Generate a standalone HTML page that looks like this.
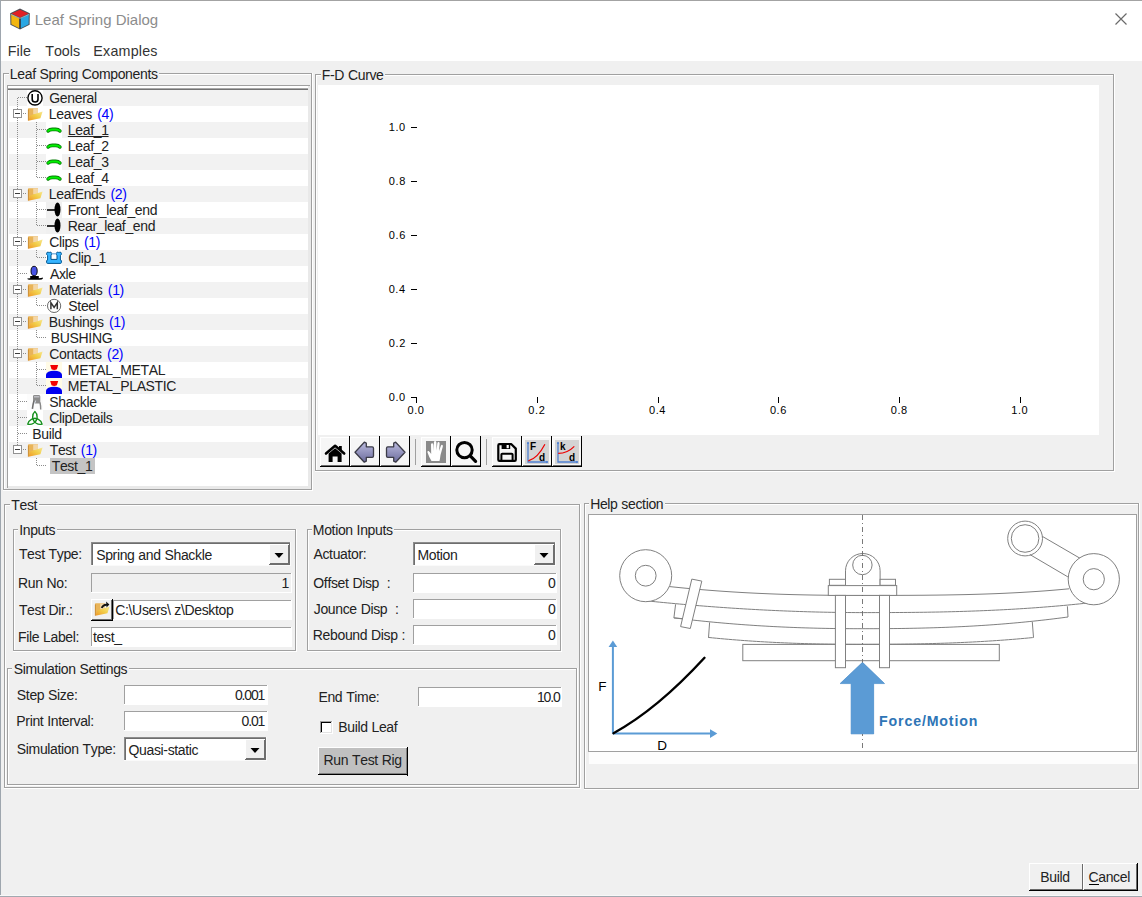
<!DOCTYPE html>
<html><head><meta charset="utf-8"><title>Leaf Spring Dialog</title>
<style>
html,body{margin:0;padding:0;}
body{width:1142px;height:897px;position:relative;overflow:hidden;background:#f0f0f0;font-family:"Liberation Sans",sans-serif;}
body>div{position:absolute;}
.t{white-space:pre;font-kerning:none;}
svg{overflow:visible}
</style></head><body>
<div style="left:0px;top:0px;width:1142px;height:61px;background:#ffffff;"></div>
<div style="left:0px;top:0px;width:1142px;height:1px;background:#a3a3a3;"></div>
<div style="left:0px;top:0px;width:1px;height:897px;background:#9ea6ae;"></div>
<div style="left:0px;top:895px;width:1142px;height:1px;background:#f8f8f8;"></div>
<div style="left:0px;top:896px;width:1142px;height:1px;background:#a2a9b0;"></div>
<svg style="position:absolute;left:0;top:0" width="40" height="34" viewBox="0 0 40 34">
<path d="M20 8.6 L29.8 13.2 L29.6 24.8 L20 29.6 L10.4 24.8 L10.2 13.2 Z" fill="#4a4f57"/>
<path d="M20 9.8 L28.4 13.6 L20 17.6 L11.6 13.6 Z" fill="#e11f25"/>
<path d="M11.2 14.6 L19.2 18.6 L19.2 28.2 L11.4 24.2 Z" fill="#f2b50f"/>
<path d="M28.8 14.6 L20.8 18.6 L20.8 28.2 L28.6 24.2 Z" fill="#2aa7e3"/>
<path d="M11.2 14.4 L20 18.4 L28.8 14.4" fill="none" stroke="#c9ced4" stroke-width="0.7"/>
<path d="M20 18.6 V28.6" stroke="#2e3238" stroke-width="1"/>
</svg>
<div class="t" style="left:34.77px;top:12px;font-size:15px;line-height:15px;color:#8c8c8c;">Leaf Spring Dialog</div>
<svg style="position:absolute;left:1114px;top:12px" width="14" height="14"><path d="M1.5 1.5 L12.5 12.5 M12.5 1.5 L1.5 12.5" stroke="#6a6a6a" stroke-width="1.2"/></svg>
<div class="t" style="left:7.83px;top:44px;font-size:14.3px;line-height:14.3px;color:#333;">File</div>
<div class="t" style="left:45.18px;top:44px;font-size:14.3px;line-height:14.3px;color:#333;">Tools</div>
<div class="t" style="left:93.33px;top:44px;font-size:14.3px;line-height:14.3px;color:#333;letter-spacing:0.2px;">Examples</div>
<div style="left:4px;top:74px;width:309px;height:1px;background:#ffffff;"></div>
<div style="left:4px;top:74px;width:1px;height:417px;background:#ffffff;"></div>
<div style="left:3px;top:490px;width:310px;height:1px;background:#ffffff;"></div>
<div style="left:312px;top:73px;width:1px;height:418px;background:#ffffff;"></div>
<div style="left:3px;top:73px;width:309px;height:1px;background:#a0a0a0;"></div>
<div style="left:3px;top:73px;width:1px;height:417px;background:#a0a0a0;"></div>
<div style="left:3px;top:489px;width:309px;height:1px;background:#a0a0a0;"></div>
<div style="left:311px;top:73px;width:1px;height:417px;background:#a0a0a0;"></div>
<div style="left:9px;top:65px;width:150px;height:18px;background:#f0f0f0;"></div>
<div class="t" style="left:9.85px;top:67px;font-size:14px;line-height:14px;color:#222;word-spacing:0.3px;letter-spacing:-0.35px;">Leaf Spring Components</div>
<div style="left:8px;top:86px;width:300px;height:400px;background:#ffffff;"></div>
<div style="left:7px;top:85px;width:1px;height:403px;background:#a0a0a0;"></div>
<div style="left:7px;top:85px;width:303px;height:1px;background:#a0a0a0;"></div>
<div style="left:308px;top:86px;width:3px;height:403px;background:#e9e9e9;"></div>
<div style="left:8px;top:486px;width:303px;height:3px;background:#e9e9e9;"></div>
<div style="left:8px;top:88px;width:300px;height:1px;background:#a9a9a9;"></div>
<div style="left:8px;top:89px;width:300px;height:1px;background:#727272;"></div>
<div style="left:9px;top:90px;width:299px;height:16px;background:#f2f2f2;"></div>
<div style="left:9px;top:122px;width:299px;height:16px;background:#f2f2f2;"></div>
<div style="left:9px;top:154px;width:299px;height:16px;background:#f2f2f2;"></div>
<div style="left:9px;top:186px;width:299px;height:16px;background:#f2f2f2;"></div>
<div style="left:9px;top:218px;width:299px;height:16px;background:#f2f2f2;"></div>
<div style="left:9px;top:250px;width:299px;height:16px;background:#f2f2f2;"></div>
<div style="left:9px;top:282px;width:299px;height:16px;background:#f2f2f2;"></div>
<div style="left:9px;top:314px;width:299px;height:16px;background:#f2f2f2;"></div>
<div style="left:9px;top:346px;width:299px;height:16px;background:#f2f2f2;"></div>
<div style="left:9px;top:378px;width:299px;height:16px;background:#f2f2f2;"></div>
<div style="left:9px;top:410px;width:299px;height:16px;background:#f2f2f2;"></div>
<div style="left:9px;top:442px;width:299px;height:16px;background:#f2f2f2;"></div>
<div style="left:17px;top:98px;width:1px;height:347px;background:repeating-linear-gradient(180deg,#8c8c8c 0 1px,transparent 1px 2px)"></div>
<div style="left:36px;top:122px;width:1px;height:56px;background:repeating-linear-gradient(180deg,#8c8c8c 0 1px,transparent 1px 2px)"></div>
<div style="left:36px;top:202px;width:1px;height:24px;background:repeating-linear-gradient(180deg,#8c8c8c 0 1px,transparent 1px 2px)"></div>
<div style="left:36px;top:250px;width:1px;height:8px;background:repeating-linear-gradient(180deg,#8c8c8c 0 1px,transparent 1px 2px)"></div>
<div style="left:36px;top:298px;width:1px;height:8px;background:repeating-linear-gradient(180deg,#8c8c8c 0 1px,transparent 1px 2px)"></div>
<div style="left:36px;top:330px;width:1px;height:8px;background:repeating-linear-gradient(180deg,#8c8c8c 0 1px,transparent 1px 2px)"></div>
<div style="left:36px;top:362px;width:1px;height:24px;background:repeating-linear-gradient(180deg,#8c8c8c 0 1px,transparent 1px 2px)"></div>
<div style="left:36px;top:458px;width:1px;height:8px;background:repeating-linear-gradient(180deg,#8c8c8c 0 1px,transparent 1px 2px)"></div>
<div style="left:18px;top:97px;width:9px;height:1px;background:repeating-linear-gradient(90deg,#8c8c8c 0 1px,transparent 1px 2px)"></div>
<svg style="position:absolute;left:27px;top:90px" width="16" height="16" viewBox="0 0 16 16"><rect width="16" height="16" fill="#fff"/><circle cx="8" cy="7.9" r="7.1" fill="#fff" stroke="#000" stroke-width="1.4"/><path d="M5.2 4 V9.2 Q5.2 12 8.1 12 Q11 12 11 9.2 V4" fill="none" stroke="#000" stroke-width="1.6"/></svg>
<div class="t" style="left:49.30px;top:91px;font-size:14px;line-height:14px;color:#222;word-spacing:0.3px;letter-spacing:-0.35px;">General</div>
<div style="left:23px;top:113px;width:4px;height:1px;background:repeating-linear-gradient(90deg,#8c8c8c 0 1px,transparent 1px 2px)"></div>
<svg style="position:absolute;left:27px;top:106px" width="16" height="16" viewBox="0 0 16 16"><defs><linearGradient id="fg2" x1="0" y1="1" x2="1" y2="0"><stop offset="0" stop-color="#f09628"/><stop offset="0.55" stop-color="#f2cf4a"/><stop offset="1" stop-color="#f7e794"/></linearGradient></defs><path d="M1 3 Q1 2.3 1.7 2.3 H11 V9.5 L1.2 14.6 Z" fill="#e9b458"/><path d="M6.2 2.4 H11 V8.3 H6.2 Z" fill="#f3d6a6"/><path d="M1.4 14.8 L3.3 9.4 L15.6 5.5 L13.4 12.2 Z" fill="url(#fg2)"/><path d="M1.4 14.6 V3.5" stroke="#c98a30" stroke-width="0.9"/></svg>
<div class="t" style="left:48.85px;top:107px;font-size:14px;line-height:14px;color:#222;word-spacing:0.3px;letter-spacing:-0.35px;">Leaves</div>
<div class="t" style="left:97.24px;top:107px;font-size:14px;line-height:14px;color:#0000ff;word-spacing:0.3px;letter-spacing:-0.35px;">(4)</div>
<div style="left:13px;top:109px;width:7px;height:7px;border:1px solid #919191;background:#fff"></div>
<div style="left:15px;top:113px;width:5px;height:1px;background:#3c3c3c;"></div>
<div style="left:37px;top:129px;width:9px;height:1px;background:repeating-linear-gradient(90deg,#8c8c8c 0 1px,transparent 1px 2px)"></div>
<svg style="position:absolute;left:46px;top:122px" width="16" height="16" viewBox="0 0 16 16"><rect width="16" height="16" fill="#fff"/><path d="M2.1 8.9 Q3.6 7.4 6.3 7.4 L9.7 7.4 Q12.4 7.4 13.9 8.9" fill="none" stroke="#0a7d0a" stroke-width="3.6" stroke-linecap="round" stroke-linejoin="round"/><path d="M2.1 8.9 Q3.6 7.4 6.3 7.4 L9.7 7.4 Q12.4 7.4 13.9 8.9" fill="none" stroke="#00f000" stroke-width="2" stroke-linecap="round" stroke-linejoin="round"/></svg>
<div class="t" style="left:67.85px;top:123px;font-size:14px;line-height:14px;color:#222;word-spacing:0.3px;letter-spacing:-0.35px;text-decoration:underline;">Leaf_1</div>
<div style="left:37px;top:145px;width:9px;height:1px;background:repeating-linear-gradient(90deg,#8c8c8c 0 1px,transparent 1px 2px)"></div>
<svg style="position:absolute;left:46px;top:138px" width="16" height="16" viewBox="0 0 16 16"><path d="M2.1 8.9 Q3.6 7.4 6.3 7.4 L9.7 7.4 Q12.4 7.4 13.9 8.9" fill="none" stroke="#0a7d0a" stroke-width="3.6" stroke-linecap="round" stroke-linejoin="round"/><path d="M2.1 8.9 Q3.6 7.4 6.3 7.4 L9.7 7.4 Q12.4 7.4 13.9 8.9" fill="none" stroke="#00f000" stroke-width="2" stroke-linecap="round" stroke-linejoin="round"/></svg>
<div class="t" style="left:67.85px;top:139px;font-size:14px;line-height:14px;color:#222;word-spacing:0.3px;letter-spacing:-0.35px;">Leaf_2</div>
<div style="left:37px;top:161px;width:9px;height:1px;background:repeating-linear-gradient(90deg,#8c8c8c 0 1px,transparent 1px 2px)"></div>
<svg style="position:absolute;left:46px;top:154px" width="16" height="16" viewBox="0 0 16 16"><rect width="16" height="16" fill="#fff"/><path d="M2.1 8.9 Q3.6 7.4 6.3 7.4 L9.7 7.4 Q12.4 7.4 13.9 8.9" fill="none" stroke="#0a7d0a" stroke-width="3.6" stroke-linecap="round" stroke-linejoin="round"/><path d="M2.1 8.9 Q3.6 7.4 6.3 7.4 L9.7 7.4 Q12.4 7.4 13.9 8.9" fill="none" stroke="#00f000" stroke-width="2" stroke-linecap="round" stroke-linejoin="round"/></svg>
<div class="t" style="left:67.85px;top:155px;font-size:14px;line-height:14px;color:#222;word-spacing:0.3px;letter-spacing:-0.35px;">Leaf_3</div>
<div style="left:37px;top:177px;width:9px;height:1px;background:repeating-linear-gradient(90deg,#8c8c8c 0 1px,transparent 1px 2px)"></div>
<svg style="position:absolute;left:46px;top:170px" width="16" height="16" viewBox="0 0 16 16"><path d="M2.1 8.9 Q3.6 7.4 6.3 7.4 L9.7 7.4 Q12.4 7.4 13.9 8.9" fill="none" stroke="#0a7d0a" stroke-width="3.6" stroke-linecap="round" stroke-linejoin="round"/><path d="M2.1 8.9 Q3.6 7.4 6.3 7.4 L9.7 7.4 Q12.4 7.4 13.9 8.9" fill="none" stroke="#00f000" stroke-width="2" stroke-linecap="round" stroke-linejoin="round"/></svg>
<div class="t" style="left:67.85px;top:171px;font-size:14px;line-height:14px;color:#222;word-spacing:0.3px;letter-spacing:-0.35px;">Leaf_4</div>
<div style="left:23px;top:193px;width:4px;height:1px;background:repeating-linear-gradient(90deg,#8c8c8c 0 1px,transparent 1px 2px)"></div>
<svg style="position:absolute;left:27px;top:186px" width="16" height="16" viewBox="0 0 16 16"><defs><linearGradient id="fg7" x1="0" y1="1" x2="1" y2="0"><stop offset="0" stop-color="#f09628"/><stop offset="0.55" stop-color="#f2cf4a"/><stop offset="1" stop-color="#f7e794"/></linearGradient></defs><path d="M1 3 Q1 2.3 1.7 2.3 H11 V9.5 L1.2 14.6 Z" fill="#e9b458"/><path d="M6.2 2.4 H11 V8.3 H6.2 Z" fill="#f3d6a6"/><path d="M1.4 14.8 L3.3 9.4 L15.6 5.5 L13.4 12.2 Z" fill="url(#fg7)"/><path d="M1.4 14.6 V3.5" stroke="#c98a30" stroke-width="0.9"/></svg>
<div class="t" style="left:48.85px;top:187px;font-size:14px;line-height:14px;color:#222;word-spacing:0.3px;letter-spacing:-0.35px;">LeafEnds</div>
<div class="t" style="left:110.55px;top:187px;font-size:14px;line-height:14px;color:#0000ff;word-spacing:0.3px;letter-spacing:-0.35px;">(2)</div>
<div style="left:13px;top:189px;width:7px;height:7px;border:1px solid #919191;background:#fff"></div>
<div style="left:15px;top:193px;width:5px;height:1px;background:#3c3c3c;"></div>
<div style="left:37px;top:209px;width:9px;height:1px;background:repeating-linear-gradient(90deg,#8c8c8c 0 1px,transparent 1px 2px)"></div>
<svg style="position:absolute;left:46px;top:202px" width="16" height="16" viewBox="0 0 16 16"><rect width="16" height="16" fill="#f0f0f0"/><path d="M1 8 H9" stroke="#000" stroke-width="1.6"/><ellipse cx="11.5" cy="7.5" rx="3" ry="7" fill="#000"/></svg>
<div class="t" style="left:67.85px;top:203px;font-size:14px;line-height:14px;color:#222;word-spacing:0.3px;letter-spacing:-0.35px;">Front_leaf_end</div>
<div style="left:37px;top:225px;width:9px;height:1px;background:repeating-linear-gradient(90deg,#8c8c8c 0 1px,transparent 1px 2px)"></div>
<svg style="position:absolute;left:46px;top:218px" width="16" height="16" viewBox="0 0 16 16"><rect width="16" height="16" fill="#f0f0f0"/><path d="M1 8 H9" stroke="#000" stroke-width="1.6"/><ellipse cx="11.5" cy="7.5" rx="3" ry="7" fill="#000"/></svg>
<div class="t" style="left:67.85px;top:219px;font-size:14px;line-height:14px;color:#222;word-spacing:0.3px;letter-spacing:-0.35px;">Rear_leaf_end</div>
<div style="left:23px;top:241px;width:4px;height:1px;background:repeating-linear-gradient(90deg,#8c8c8c 0 1px,transparent 1px 2px)"></div>
<svg style="position:absolute;left:27px;top:234px" width="16" height="16" viewBox="0 0 16 16"><defs><linearGradient id="fg10" x1="0" y1="1" x2="1" y2="0"><stop offset="0" stop-color="#f09628"/><stop offset="0.55" stop-color="#f2cf4a"/><stop offset="1" stop-color="#f7e794"/></linearGradient></defs><path d="M1 3 Q1 2.3 1.7 2.3 H11 V9.5 L1.2 14.6 Z" fill="#e9b458"/><path d="M6.2 2.4 H11 V8.3 H6.2 Z" fill="#f3d6a6"/><path d="M1.4 14.8 L3.3 9.4 L15.6 5.5 L13.4 12.2 Z" fill="url(#fg10)"/><path d="M1.4 14.6 V3.5" stroke="#c98a30" stroke-width="0.9"/></svg>
<div class="t" style="left:49.29px;top:235px;font-size:14px;line-height:14px;color:#222;word-spacing:0.3px;letter-spacing:-0.35px;">Clips</div>
<div class="t" style="left:84.00px;top:235px;font-size:14px;line-height:14px;color:#0000ff;word-spacing:0.3px;letter-spacing:-0.35px;">(1)</div>
<div style="left:13px;top:237px;width:7px;height:7px;border:1px solid #919191;background:#fff"></div>
<div style="left:15px;top:241px;width:5px;height:1px;background:#3c3c3c;"></div>
<div style="left:37px;top:257px;width:9px;height:1px;background:repeating-linear-gradient(90deg,#8c8c8c 0 1px,transparent 1px 2px)"></div>
<svg style="position:absolute;left:46px;top:250px" width="16" height="16" viewBox="0 0 16 16"><rect width="16" height="16" fill="#fff"/><path d="M1.5 13.4 Q0.6 13.4 0.6 12.4 V11 Q0.6 10 1.6 10 V5.6 Q0.6 5.1 0.6 3.6 Q0.6 2.1 2 2.1 Q2.8 2.1 3.1 2.8 Q3.4 2.1 4.2 2.1 Q5.6 2.1 5.6 3.6 Q5.6 5.1 5 5.6 V9.4 H11 V5.6 Q10.4 5.1 10.4 3.6 Q10.4 2.1 11.8 2.1 Q12.6 2.1 12.9 2.8 Q13.2 2.1 14 2.1 Q15.4 2.1 15.4 3.6 Q15.4 5.1 14.4 5.6 V10 Q15.4 10 15.4 11 V12.4 Q15.4 13.4 14.4 13.4 Z" fill="#36b4ff" stroke="#005590" stroke-width="1"/><path d="M5.6 3.8 H10.4" stroke="#6aa8d8" stroke-width="1.2"/></svg>
<div class="t" style="left:68.29px;top:251px;font-size:14px;line-height:14px;color:#222;word-spacing:0.3px;letter-spacing:-0.35px;">Clip_1</div>
<div style="left:18px;top:273px;width:9px;height:1px;background:repeating-linear-gradient(90deg,#8c8c8c 0 1px,transparent 1px 2px)"></div>
<svg style="position:absolute;left:27px;top:266px" width="16" height="16" viewBox="0 0 16 16"><ellipse cx="7.1" cy="5" rx="3.1" ry="4.7" fill="#4652e4" stroke="#000" stroke-width="0.9"/><path d="M3.2 10 H11.8 V12.3 Q14.4 12.3 15.8 11.6 V12.8 Q15.2 13.7 12.5 13.7 H2 Q0.2 13.7 0.2 12.6 Q1 12.3 3.2 12.3 Z" fill="#000"/></svg>
<div class="t" style="left:49.97px;top:267px;font-size:14px;line-height:14px;color:#222;word-spacing:0.3px;letter-spacing:-0.35px;">Axle</div>
<div style="left:23px;top:289px;width:4px;height:1px;background:repeating-linear-gradient(90deg,#8c8c8c 0 1px,transparent 1px 2px)"></div>
<svg style="position:absolute;left:27px;top:282px" width="16" height="16" viewBox="0 0 16 16"><defs><linearGradient id="fg13" x1="0" y1="1" x2="1" y2="0"><stop offset="0" stop-color="#f09628"/><stop offset="0.55" stop-color="#f2cf4a"/><stop offset="1" stop-color="#f7e794"/></linearGradient></defs><path d="M1 3 Q1 2.3 1.7 2.3 H11 V9.5 L1.2 14.6 Z" fill="#e9b458"/><path d="M6.2 2.4 H11 V8.3 H6.2 Z" fill="#f3d6a6"/><path d="M1.4 14.8 L3.3 9.4 L15.6 5.5 L13.4 12.2 Z" fill="url(#fg13)"/><path d="M1.4 14.6 V3.5" stroke="#c98a30" stroke-width="0.9"/></svg>
<div class="t" style="left:48.85px;top:283px;font-size:14px;line-height:14px;color:#222;word-spacing:0.3px;letter-spacing:-0.35px;">Materials</div>
<div class="t" style="left:107.83px;top:283px;font-size:14px;line-height:14px;color:#0000ff;word-spacing:0.3px;letter-spacing:-0.35px;">(1)</div>
<div style="left:13px;top:285px;width:7px;height:7px;border:1px solid #919191;background:#fff"></div>
<div style="left:15px;top:289px;width:5px;height:1px;background:#3c3c3c;"></div>
<div style="left:37px;top:305px;width:9px;height:1px;background:repeating-linear-gradient(90deg,#8c8c8c 0 1px,transparent 1px 2px)"></div>
<svg style="position:absolute;left:46px;top:298px" width="16" height="16" viewBox="0 0 16 16"><circle cx="8.1" cy="7.9" r="6.6" fill="#fff" stroke="#555" stroke-width="0.9"/><path d="M4.9 11.3 V4.6 L8.1 9.3 L11.3 4.6 V11.3" fill="none" stroke="#333" stroke-width="1.5"/></svg>
<div class="t" style="left:68.36px;top:299px;font-size:14px;line-height:14px;color:#222;word-spacing:0.3px;letter-spacing:-0.35px;">Steel</div>
<div style="left:23px;top:321px;width:4px;height:1px;background:repeating-linear-gradient(90deg,#8c8c8c 0 1px,transparent 1px 2px)"></div>
<svg style="position:absolute;left:27px;top:314px" width="16" height="16" viewBox="0 0 16 16"><defs><linearGradient id="fg15" x1="0" y1="1" x2="1" y2="0"><stop offset="0" stop-color="#f09628"/><stop offset="0.55" stop-color="#f2cf4a"/><stop offset="1" stop-color="#f7e794"/></linearGradient></defs><path d="M1 3 Q1 2.3 1.7 2.3 H11 V9.5 L1.2 14.6 Z" fill="#e9b458"/><path d="M6.2 2.4 H11 V8.3 H6.2 Z" fill="#f3d6a6"/><path d="M1.4 14.8 L3.3 9.4 L15.6 5.5 L13.4 12.2 Z" fill="url(#fg15)"/><path d="M1.4 14.6 V3.5" stroke="#c98a30" stroke-width="0.9"/></svg>
<div class="t" style="left:48.85px;top:315px;font-size:14px;line-height:14px;color:#222;word-spacing:0.3px;letter-spacing:-0.35px;">Bushings</div>
<div class="t" style="left:108.98px;top:315px;font-size:14px;line-height:14px;color:#0000ff;word-spacing:0.3px;letter-spacing:-0.35px;">(1)</div>
<div style="left:13px;top:317px;width:7px;height:7px;border:1px solid #919191;background:#fff"></div>
<div style="left:15px;top:321px;width:5px;height:1px;background:#3c3c3c;"></div>
<div style="left:37px;top:337px;width:9px;height:1px;background:repeating-linear-gradient(90deg,#8c8c8c 0 1px,transparent 1px 2px)"></div>
<div class="t" style="left:50.85px;top:331px;font-size:14px;line-height:14px;color:#222;word-spacing:0.3px;letter-spacing:-0.35px;">BUSHING</div>
<div style="left:23px;top:353px;width:4px;height:1px;background:repeating-linear-gradient(90deg,#8c8c8c 0 1px,transparent 1px 2px)"></div>
<svg style="position:absolute;left:27px;top:346px" width="16" height="16" viewBox="0 0 16 16"><defs><linearGradient id="fg16" x1="0" y1="1" x2="1" y2="0"><stop offset="0" stop-color="#f09628"/><stop offset="0.55" stop-color="#f2cf4a"/><stop offset="1" stop-color="#f7e794"/></linearGradient></defs><path d="M1 3 Q1 2.3 1.7 2.3 H11 V9.5 L1.2 14.6 Z" fill="#e9b458"/><path d="M6.2 2.4 H11 V8.3 H6.2 Z" fill="#f3d6a6"/><path d="M1.4 14.8 L3.3 9.4 L15.6 5.5 L13.4 12.2 Z" fill="url(#fg16)"/><path d="M1.4 14.6 V3.5" stroke="#c98a30" stroke-width="0.9"/></svg>
<div class="t" style="left:49.29px;top:347px;font-size:14px;line-height:14px;color:#222;word-spacing:0.3px;letter-spacing:-0.35px;">Contacts</div>
<div class="t" style="left:107.08px;top:347px;font-size:14px;line-height:14px;color:#0000ff;word-spacing:0.3px;letter-spacing:-0.35px;">(2)</div>
<div style="left:13px;top:349px;width:7px;height:7px;border:1px solid #919191;background:#fff"></div>
<div style="left:15px;top:353px;width:5px;height:1px;background:#3c3c3c;"></div>
<div style="left:37px;top:369px;width:9px;height:1px;background:repeating-linear-gradient(90deg,#8c8c8c 0 1px,transparent 1px 2px)"></div>
<svg style="position:absolute;left:46px;top:362px" width="16" height="16" viewBox="0 0 16 16"><rect x="0" y="0" width="16" height="16" fill="#fffbe6"/><path d="M4.2 3 H12.2 L10.9 7.3 Q8.2 8.6 5.5 7.3 Z" fill="#f20000"/><path d="M0 16 V12.6 Q0.8 8.7 8.1 8.7 Q15.2 8.7 16 12.6 V16 Z" fill="#0000f0"/></svg>
<div class="t" style="left:67.85px;top:363px;font-size:14px;line-height:14px;color:#222;word-spacing:0.3px;letter-spacing:-0.35px;">METAL_METAL</div>
<div style="left:37px;top:385px;width:9px;height:1px;background:repeating-linear-gradient(90deg,#8c8c8c 0 1px,transparent 1px 2px)"></div>
<svg style="position:absolute;left:46px;top:378px" width="16" height="16" viewBox="0 0 16 16"><rect x="0" y="0" width="16" height="16" fill="#fffbe6"/><path d="M4.2 3 H12.2 L10.9 7.3 Q8.2 8.6 5.5 7.3 Z" fill="#f20000"/><path d="M0 16 V12.6 Q0.8 8.7 8.1 8.7 Q15.2 8.7 16 12.6 V16 Z" fill="#0000f0"/></svg>
<div class="t" style="left:67.85px;top:379px;font-size:14px;line-height:14px;color:#222;word-spacing:0.3px;letter-spacing:-0.35px;">METAL_PLASTIC</div>
<div style="left:18px;top:401px;width:9px;height:1px;background:repeating-linear-gradient(90deg,#8c8c8c 0 1px,transparent 1px 2px)"></div>
<svg style="position:absolute;left:27px;top:394px" width="16" height="16" viewBox="0 0 16 16"><rect width="16" height="16" fill="#fcfcfc"/><path d="M6 2.3 Q6 1 7.5 1 H12 Q13.3 1 13.3 2.5 V9.6 H7.2 Q6.1 9 6.1 8 Z" fill="#8c8c8c"/><path d="M7 2.8 H12.4" stroke="#c4c4cc" stroke-width="1.3"/><path d="M7 6.8 Q5.9 10.5 5.4 14.8" fill="none" stroke="#6e6e6e" stroke-width="1.6"/><path d="M13 8.5 Q13.7 11.5 13.7 15.4" fill="none" stroke="#888" stroke-width="1.4"/><path d="M8.6 6.6 L7.4 10" stroke="#dfe6ee" stroke-width="1"/></svg>
<div class="t" style="left:49.36px;top:395px;font-size:14px;line-height:14px;color:#222;word-spacing:0.3px;letter-spacing:-0.35px;">Shackle</div>
<div style="left:18px;top:417px;width:9px;height:1px;background:repeating-linear-gradient(90deg,#8c8c8c 0 1px,transparent 1px 2px)"></div>
<svg style="position:absolute;left:27px;top:410px" width="16" height="16" viewBox="0 0 16 16"><rect width="16" height="16" fill="#fff"/><g fill="none" stroke="#16901e" stroke-width="1.35"><path d="M7.9 1.6 C4.6 4.5 5.2 10 7.9 12.2 C10.6 10 11.2 4.5 7.9 1.6 Z"/><path d="M7.9 1.6 C4.6 4.5 5.2 10 7.9 12.2 C10.6 10 11.2 4.5 7.9 1.6 Z" transform="rotate(120 7.9 9.9)"/><path d="M7.9 1.6 C4.6 4.5 5.2 10 7.9 12.2 C10.6 10 11.2 4.5 7.9 1.6 Z" transform="rotate(240 7.9 9.9)"/></g></svg>
<div class="t" style="left:49.29px;top:411px;font-size:14px;line-height:14px;color:#222;word-spacing:0.3px;letter-spacing:-0.35px;">ClipDetails</div>
<div style="left:18px;top:433px;width:9px;height:1px;background:repeating-linear-gradient(90deg,#8c8c8c 0 1px,transparent 1px 2px)"></div>
<div class="t" style="left:32.35px;top:427px;font-size:14px;line-height:14px;color:#222;word-spacing:0.3px;letter-spacing:-0.35px;">Build</div>
<div style="left:23px;top:449px;width:4px;height:1px;background:repeating-linear-gradient(90deg,#8c8c8c 0 1px,transparent 1px 2px)"></div>
<svg style="position:absolute;left:27px;top:442px" width="16" height="16" viewBox="0 0 16 16"><defs><linearGradient id="fg21" x1="0" y1="1" x2="1" y2="0"><stop offset="0" stop-color="#f09628"/><stop offset="0.55" stop-color="#f2cf4a"/><stop offset="1" stop-color="#f7e794"/></linearGradient></defs><path d="M1 3 Q1 2.3 1.7 2.3 H11 V9.5 L1.2 14.6 Z" fill="#e9b458"/><path d="M6.2 2.4 H11 V8.3 H6.2 Z" fill="#f3d6a6"/><path d="M1.4 14.8 L3.3 9.4 L15.6 5.5 L13.4 12.2 Z" fill="url(#fg21)"/><path d="M1.4 14.6 V3.5" stroke="#c98a30" stroke-width="0.9"/></svg>
<div class="t" style="left:49.69px;top:443px;font-size:14px;line-height:14px;color:#222;word-spacing:0.3px;letter-spacing:-0.35px;">Test</div>
<div class="t" style="left:80.85px;top:443px;font-size:14px;line-height:14px;color:#0000ff;word-spacing:0.3px;letter-spacing:-0.35px;">(1)</div>
<div style="left:13px;top:445px;width:7px;height:7px;border:1px solid #919191;background:#fff"></div>
<div style="left:15px;top:449px;width:5px;height:1px;background:#3c3c3c;"></div>
<div style="left:37px;top:465px;width:9px;height:1px;background:repeating-linear-gradient(90deg,#8c8c8c 0 1px,transparent 1px 2px)"></div>
<div style="left:50px;top:458px;width:45px;height:16px;background:#c4c4c4;"></div>
<div class="t" style="left:51.69px;top:459px;font-size:14px;line-height:14px;color:#222;word-spacing:0.3px;letter-spacing:-0.35px;">Test_1</div>
<div style="left:316px;top:75px;width:799px;height:1px;background:#ffffff;"></div>
<div style="left:316px;top:75px;width:1px;height:397px;background:#ffffff;"></div>
<div style="left:315px;top:471px;width:800px;height:1px;background:#ffffff;"></div>
<div style="left:1114px;top:74px;width:1px;height:398px;background:#ffffff;"></div>
<div style="left:315px;top:74px;width:799px;height:1px;background:#a0a0a0;"></div>
<div style="left:315px;top:74px;width:1px;height:397px;background:#a0a0a0;"></div>
<div style="left:315px;top:470px;width:799px;height:1px;background:#a0a0a0;"></div>
<div style="left:1113px;top:74px;width:1px;height:397px;background:#a0a0a0;"></div>
<div style="left:321px;top:66px;width:64px;height:18px;background:#f0f0f0;"></div>
<div class="t" style="left:321.85px;top:68px;font-size:14px;line-height:14px;color:#222;word-spacing:0.3px;letter-spacing:-0.35px;">F-D Curve</div>
<div style="left:318px;top:85px;width:781px;height:350px;background:#ffffff;"></div>
<div style="left:411px;top:397px;width:6px;height:1px;background:#000;"></div>
<div class="t" style="left:388.74px;top:392px;font-size:11px;line-height:11px;letter-spacing:0.6px;color:#000">0.0</div>
<div style="left:416px;top:397px;width:1px;height:6px;background:#000;"></div>
<div class="t" style="left:407.45px;top:405px;font-size:11px;line-height:11px;letter-spacing:0.6px;color:#000">0.0</div>
<div style="left:411px;top:343px;width:6px;height:1px;background:#000;"></div>
<div class="t" style="left:388.86px;top:338px;font-size:11px;line-height:11px;letter-spacing:0.6px;color:#000">0.2</div>
<div style="left:537px;top:397px;width:1px;height:6px;background:#000;"></div>
<div class="t" style="left:528.32px;top:405px;font-size:11px;line-height:11px;letter-spacing:0.6px;color:#000">0.2</div>
<div style="left:411px;top:289px;width:6px;height:1px;background:#000;"></div>
<div class="t" style="left:388.63px;top:284px;font-size:11px;line-height:11px;letter-spacing:0.6px;color:#000">0.4</div>
<div style="left:658px;top:397px;width:1px;height:6px;background:#000;"></div>
<div class="t" style="left:649.00px;top:405px;font-size:11px;line-height:11px;letter-spacing:0.6px;color:#000">0.4</div>
<div style="left:411px;top:235px;width:6px;height:1px;background:#000;"></div>
<div class="t" style="left:388.79px;top:230px;font-size:11px;line-height:11px;letter-spacing:0.6px;color:#000">0.6</div>
<div style="left:778px;top:397px;width:1px;height:6px;background:#000;"></div>
<div class="t" style="left:769.88px;top:405px;font-size:11px;line-height:11px;letter-spacing:0.6px;color:#000">0.6</div>
<div style="left:411px;top:181px;width:6px;height:1px;background:#000;"></div>
<div class="t" style="left:388.79px;top:176px;font-size:11px;line-height:11px;letter-spacing:0.6px;color:#000">0.8</div>
<div style="left:899px;top:397px;width:1px;height:6px;background:#000;"></div>
<div class="t" style="left:890.68px;top:405px;font-size:11px;line-height:11px;letter-spacing:0.6px;color:#000">0.8</div>
<div style="left:411px;top:127px;width:6px;height:1px;background:#000;"></div>
<div class="t" style="left:388.74px;top:122px;font-size:11px;line-height:11px;letter-spacing:0.6px;color:#000">1.0</div>
<div style="left:1020px;top:397px;width:1px;height:6px;background:#000;"></div>
<div class="t" style="left:1011.25px;top:405px;font-size:11px;line-height:11px;letter-spacing:0.6px;color:#000">1.0</div>
<div style="left:320px;top:437px;width:30px;height:30px;background:#f0f0f0;"></div>
<div style="left:320px;top:437px;width:29px;height:1px;background:#ffffff;"></div>
<div style="left:320px;top:437px;width:1px;height:29px;background:#ffffff;"></div>
<div style="left:321px;top:438px;width:28px;height:27px;background:#f6f6f6;"></div>
<div style="left:349px;top:436px;width:1px;height:31px;background:#000000;"></div>
<div style="left:320px;top:466px;width:30px;height:1px;background:#000000;"></div>
<div style="left:321px;top:465px;width:28px;height:1px;background:#6a6a6a;"></div>
<svg style="position:absolute;left:320px;top:437px" width="30" height="30" viewBox="0 0 30 30"><path d="M6 16.5 L15.1 8.8 L24.2 16.5" fill="none" stroke="#000" stroke-width="2.6" stroke-linejoin="round" stroke-linecap="round"/><path d="M19 9 H21.8 V14.2 L19 11.9 Z" fill="#000"/><path d="M8.6 16.6 L15.1 11.3 L21.6 16.6 V25 H17.6 V19.6 H12.6 V25 H8.6 Z" fill="#000"/></svg>
<div style="left:350px;top:437px;width:30px;height:30px;background:#f0f0f0;"></div>
<div style="left:350px;top:437px;width:29px;height:1px;background:#ffffff;"></div>
<div style="left:350px;top:437px;width:1px;height:29px;background:#ffffff;"></div>
<div style="left:351px;top:438px;width:28px;height:27px;background:#f6f6f6;"></div>
<div style="left:379px;top:436px;width:1px;height:31px;background:#000000;"></div>
<div style="left:350px;top:466px;width:30px;height:1px;background:#000000;"></div>
<div style="left:351px;top:465px;width:28px;height:1px;background:#6a6a6a;"></div>
<svg style="position:absolute;left:350px;top:437px" width="30" height="30" viewBox="0 0 30 30"><defs><linearGradient id="ga" x1="0" y1="0" x2="0" y2="1"><stop offset="0" stop-color="#bcbce0"/><stop offset="1" stop-color="#6c6c9c"/></linearGradient></defs><path d="M5 15.2 L14.3 5.2 L16.3 6.2 V9.8 H22.2 Q23.5 9.8 23.5 11.2 V19 Q23.5 20.4 22.2 20.4 H16.3 V24.2 L14.3 25.2 Z" fill="url(#ga)" stroke="#3c3c48" stroke-width="1.3" stroke-linejoin="round"/></svg>
<div style="left:380px;top:437px;width:30px;height:30px;background:#f0f0f0;"></div>
<div style="left:380px;top:437px;width:29px;height:1px;background:#ffffff;"></div>
<div style="left:380px;top:437px;width:1px;height:29px;background:#ffffff;"></div>
<div style="left:381px;top:438px;width:28px;height:27px;background:#f6f6f6;"></div>
<div style="left:409px;top:436px;width:1px;height:31px;background:#000000;"></div>
<div style="left:380px;top:466px;width:30px;height:1px;background:#000000;"></div>
<div style="left:381px;top:465px;width:28px;height:1px;background:#6a6a6a;"></div>
<svg style="position:absolute;left:380px;top:437px" width="30" height="30" viewBox="0 0 30 30"><path d="M25 15.2 L15.7 5.2 L13.7 6.2 V9.8 H7.8 Q6.5 9.8 6.5 11.2 V19 Q6.5 20.4 7.8 20.4 H13.7 V24.2 L15.7 25.2 Z" fill="url(#ga)" stroke="#3c3c48" stroke-width="1.3" stroke-linejoin="round"/></svg>
<div style="left:415px;top:439px;width:1px;height:26px;background:#a0a0a0;"></div>
<div style="left:421px;top:437px;width:30px;height:30px;background:#f0f0f0;"></div>
<div style="left:421px;top:437px;width:29px;height:1px;background:#ffffff;"></div>
<div style="left:421px;top:437px;width:1px;height:29px;background:#ffffff;"></div>
<div style="left:422px;top:438px;width:28px;height:27px;background:#f6f6f6;"></div>
<div style="left:450px;top:436px;width:1px;height:31px;background:#000000;"></div>
<div style="left:421px;top:466px;width:30px;height:1px;background:#000000;"></div>
<div style="left:422px;top:465px;width:28px;height:1px;background:#6a6a6a;"></div>
<svg style="position:absolute;left:421px;top:437px" width="30" height="30" viewBox="0 0 30 30"><rect x="5" y="4" width="20" height="22" fill="#8a8a8a"/><path d="M10.5 24 Q8 20 6.5 15.5 Q6 13.5 7.6 14 Q9 15 10.2 17 L10 7.5 Q10.2 6 11.3 6.2 Q12.3 6.5 12.4 8 L12.8 14 L12.9 5.3 Q13.2 3.8 14.3 4 Q15.4 4.2 15.4 5.6 L15.5 13.5 L16.4 6 Q16.8 4.8 17.8 5 Q18.7 5.3 18.6 6.8 L18 14 L20 8.5 Q20.5 7.5 21.4 7.9 Q22.2 8.4 21.8 9.8 L19.5 18 Q19 22 18.5 24 Z" fill="#fff"/></svg>
<div style="left:451px;top:437px;width:30px;height:30px;background:#f0f0f0;"></div>
<div style="left:451px;top:437px;width:29px;height:1px;background:#ffffff;"></div>
<div style="left:451px;top:437px;width:1px;height:29px;background:#ffffff;"></div>
<div style="left:452px;top:438px;width:28px;height:27px;background:#f6f6f6;"></div>
<div style="left:480px;top:436px;width:1px;height:31px;background:#000000;"></div>
<div style="left:451px;top:466px;width:30px;height:1px;background:#000000;"></div>
<div style="left:452px;top:465px;width:28px;height:1px;background:#6a6a6a;"></div>
<svg style="position:absolute;left:451px;top:437px" width="30" height="30" viewBox="0 0 30 30"><circle cx="13.5" cy="13.1" r="7.7" fill="none" stroke="#000" stroke-width="3"/><path d="M19 18.6 L24.6 24.4" stroke="#000" stroke-width="3.2" stroke-linecap="round"/></svg>
<div style="left:486px;top:439px;width:1px;height:26px;background:#a0a0a0;"></div>
<div style="left:492px;top:437px;width:30px;height:30px;background:#f0f0f0;"></div>
<div style="left:492px;top:437px;width:29px;height:1px;background:#ffffff;"></div>
<div style="left:492px;top:437px;width:1px;height:29px;background:#ffffff;"></div>
<div style="left:493px;top:438px;width:28px;height:27px;background:#f6f6f6;"></div>
<div style="left:521px;top:436px;width:1px;height:31px;background:#000000;"></div>
<div style="left:492px;top:466px;width:30px;height:1px;background:#000000;"></div>
<div style="left:493px;top:465px;width:28px;height:1px;background:#6a6a6a;"></div>
<svg style="position:absolute;left:492px;top:437px" width="30" height="30" viewBox="0 0 30 30"><path d="M6.3 8.4 Q6.3 7.2 7.5 7.2 H19.4 L23.8 11.6 V22.7 Q23.8 23.9 22.6 23.9 H7.5 Q6.3 23.9 6.3 22.7 Z" fill="none" stroke="#000" stroke-width="2.2" stroke-linejoin="round"/><rect x="9.6" y="7" width="8.6" height="5" fill="#000"/><rect x="14.6" y="8" width="2.2" height="3.2" fill="#fff"/><path d="M9.4 23 V17.6 Q9.4 16.7 10.3 16.7 H19.7 Q20.6 16.7 20.6 17.6 V23" fill="none" stroke="#000" stroke-width="2"/></svg>
<div style="left:522px;top:437px;width:30px;height:30px;background:#f0f0f0;"></div>
<div style="left:522px;top:437px;width:29px;height:1px;background:#ffffff;"></div>
<div style="left:522px;top:437px;width:1px;height:29px;background:#ffffff;"></div>
<div style="left:523px;top:438px;width:28px;height:27px;background:#f6f6f6;"></div>
<div style="left:551px;top:436px;width:1px;height:31px;background:#000000;"></div>
<div style="left:522px;top:466px;width:30px;height:1px;background:#000000;"></div>
<div style="left:523px;top:465px;width:28px;height:1px;background:#6a6a6a;"></div>
<svg style="position:absolute;left:522px;top:437px" width="30" height="30" viewBox="0 0 30 30"><rect x="3" y="3" width="24" height="24" fill="#d4d4d4"/><path d="M6 5 V25 H26" fill="none" stroke="#5080d0" stroke-width="1.3"/><path d="M4.8 7 L6 4.5 L7.2 7 Z M24 23.8 L26.5 25 L24 26.2 Z" fill="#5080d0"/><path d="M6.3 23.8 Q15.5 21.5 22.9 7.2" fill="none" stroke="#ee0000" stroke-width="1.2"/><text x="8" y="13" font-family="Liberation Sans" font-weight="bold" font-size="10" fill="#000">F</text><text x="17" y="23.5" font-family="Liberation Sans" font-weight="bold" font-size="10" fill="#000">d</text></svg>
<div style="left:552px;top:437px;width:30px;height:30px;background:#f0f0f0;"></div>
<div style="left:552px;top:437px;width:29px;height:1px;background:#ffffff;"></div>
<div style="left:552px;top:437px;width:1px;height:29px;background:#ffffff;"></div>
<div style="left:553px;top:438px;width:28px;height:27px;background:#f6f6f6;"></div>
<div style="left:581px;top:436px;width:1px;height:31px;background:#000000;"></div>
<div style="left:552px;top:466px;width:30px;height:1px;background:#000000;"></div>
<div style="left:553px;top:465px;width:28px;height:1px;background:#6a6a6a;"></div>
<svg style="position:absolute;left:552px;top:437px" width="30" height="30" viewBox="0 0 30 30"><rect x="3" y="3" width="24" height="24" fill="#d4d4d4"/><path d="M6 5 V25 H26" fill="none" stroke="#5080d0" stroke-width="1.3"/><path d="M4.8 7 L6 4.5 L7.2 7 Z M24 23.8 L26.5 25 L24 26.2 Z" fill="#5080d0"/><path d="M6.2 16.4 Q15.5 16.4 22.3 9.4" fill="none" stroke="#ee0000" stroke-width="1.2"/><text x="8" y="13" font-family="Liberation Sans" font-weight="bold" font-size="10" fill="#000">k</text><text x="17" y="23.5" font-family="Liberation Sans" font-weight="bold" font-size="10" fill="#000">d</text></svg>
<div style="left:5px;top:505px;width:576px;height:1px;background:#ffffff;"></div>
<div style="left:5px;top:505px;width:1px;height:284px;background:#ffffff;"></div>
<div style="left:4px;top:788px;width:577px;height:1px;background:#ffffff;"></div>
<div style="left:580px;top:504px;width:1px;height:285px;background:#ffffff;"></div>
<div style="left:4px;top:504px;width:576px;height:1px;background:#a0a0a0;"></div>
<div style="left:4px;top:504px;width:1px;height:284px;background:#a0a0a0;"></div>
<div style="left:4px;top:787px;width:576px;height:1px;background:#a0a0a0;"></div>
<div style="left:579px;top:504px;width:1px;height:284px;background:#a0a0a0;"></div>
<div style="left:10px;top:496px;width:29px;height:18px;background:#f0f0f0;"></div>
<div class="t" style="left:11.29px;top:498px;font-size:14px;line-height:14px;color:#222;word-spacing:0.3px;letter-spacing:-0.35px;">Test</div>
<div style="left:14px;top:530px;width:283px;height:1px;background:#ffffff;"></div>
<div style="left:14px;top:530px;width:1px;height:122px;background:#ffffff;"></div>
<div style="left:13px;top:651px;width:284px;height:1px;background:#ffffff;"></div>
<div style="left:296px;top:529px;width:1px;height:123px;background:#ffffff;"></div>
<div style="left:13px;top:529px;width:283px;height:1px;background:#a0a0a0;"></div>
<div style="left:13px;top:529px;width:1px;height:122px;background:#a0a0a0;"></div>
<div style="left:13px;top:650px;width:283px;height:1px;background:#a0a0a0;"></div>
<div style="left:295px;top:529px;width:1px;height:122px;background:#a0a0a0;"></div>
<div style="left:18px;top:521px;width:39px;height:18px;background:#f0f0f0;"></div>
<div class="t" style="left:19.21px;top:523px;font-size:14px;line-height:14px;color:#222;word-spacing:0.3px;letter-spacing:-0.35px;">Inputs</div>
<div class="t" style="left:18.89px;top:547px;font-size:14px;line-height:14px;color:#222;word-spacing:0.3px;letter-spacing:-0.35px;">Test Type:</div>
<div class="t" style="left:18.05px;top:576px;font-size:14px;line-height:14px;color:#222;word-spacing:0.3px;letter-spacing:-0.35px;">Run No:</div>
<div class="t" style="left:18.89px;top:603px;font-size:14px;line-height:14px;color:#222;word-spacing:0.3px;letter-spacing:-0.35px;">Test Dir.:</div>
<div class="t" style="left:18.05px;top:630px;font-size:14px;line-height:14px;color:#222;word-spacing:0.3px;letter-spacing:-0.35px;">File Label:</div>
<div style="left:91px;top:542px;width:200px;height:24px;background:#fff;"></div>
<div style="left:91px;top:542px;width:199px;height:1px;background:#8c8c8c;"></div>
<div style="left:92px;top:543px;width:198px;height:1px;background:#6e6e6e;"></div>
<div style="left:91px;top:542px;width:1px;height:23px;background:#8c8c8c;"></div>
<div style="left:92px;top:543px;width:1px;height:22px;background:#6e6e6e;"></div>
<div style="left:91px;top:565px;width:200px;height:1px;background:#fafafa;"></div>
<div style="left:290px;top:542px;width:1px;height:24px;background:#fafafa;"></div>
<div style="left:269px;top:544px;width:21px;height:21px;background:#f0f0f0;"></div>
<div style="left:269px;top:544px;width:21px;height:1px;background:#ffffff;"></div>
<div style="left:269px;top:544px;width:1px;height:21px;background:#ffffff;"></div>
<div style="left:269px;top:564px;width:21px;height:1px;background:#6e6e6e;"></div>
<div style="left:270px;top:563px;width:20px;height:1px;background:#6e6e6e;"></div>
<div style="left:289px;top:544px;width:1px;height:21px;background:#6e6e6e;"></div>
<div style="left:288px;top:545px;width:1px;height:20px;background:#6e6e6e;"></div>
<svg style="position:absolute;left:269px;top:544px" width="21" height="22"><path d="M5.5 9 h9 l-4.5 5 z" fill="#000"/></svg>
<div class="t" style="left:96.16px;top:548px;font-size:14px;line-height:14px;color:#222;word-spacing:0.3px;letter-spacing:-0.35px;">Spring and Shackle</div>
<div style="left:91px;top:573px;width:201px;height:20px;background:#f0f0f0;"></div>
<div style="left:91px;top:573px;width:200px;height:1px;background:#a0a0a0;"></div>
<div style="left:91px;top:573px;width:1px;height:19px;background:#a0a0a0;"></div>
<div style="left:91px;top:592px;width:201px;height:1px;background:#ffffff;"></div>
<div style="left:291px;top:573px;width:1px;height:20px;background:#ffffff;"></div>
<div class="t" style="left:281.55px;top:576px;font-size:14px;line-height:14px;color:#222;word-spacing:0.3px;letter-spacing:-1.15px;">1</div>
<div style="left:91px;top:599px;width:22px;height:22px;background:#f0f0f0;"></div>
<div style="left:91px;top:599px;width:22px;height:1px;background:#ffffff;"></div>
<div style="left:91px;top:599px;width:1px;height:21px;background:#ffffff;"></div>
<div style="left:112px;top:599px;width:1px;height:22px;background:#000;"></div>
<div style="left:91px;top:620px;width:22px;height:1px;background:#000;"></div>
<div style="left:111px;top:600px;width:1px;height:20px;background:#6a6a6a;"></div>
<div style="left:92px;top:619px;width:20px;height:1px;background:#6a6a6a;"></div>
<svg style="position:absolute;left:94px;top:601px" width="16" height="16" viewBox="0 0 16 16"><defs><linearGradient id="fgtd" x1="0" y1="1" x2="1" y2="0"><stop offset="0" stop-color="#f09628"/><stop offset="0.55" stop-color="#f2cf4a"/><stop offset="1" stop-color="#f7e794"/></linearGradient></defs><path d="M1 3 Q1 2.3 1.7 2.3 H11 V9.5 L1.2 14.6 Z" fill="#e9b458"/><path d="M6.2 2.4 H11 V8.3 H6.2 Z" fill="#f3d6a6"/><path d="M1.4 14.8 L3.3 9.4 L15.6 5.5 L13.4 12.2 Z" fill="url(#fgtd)"/><path d="M1.4 14.6 V3.5" stroke="#c98a30" stroke-width="0.9"/><path d="M6.8 6.6 Q8.6 2.6 12.4 2.7 L12 0.6 L15.4 3.5 L12.5 6.6 L12.5 4.7 Q9.8 4.5 8.4 7.2 Z" fill="#111"/></svg>
<div style="left:113px;top:600px;width:179px;height:20px;background:#fff;"></div>
<div style="left:113px;top:600px;width:178px;height:1px;background:#a0a0a0;"></div>
<div style="left:113px;top:600px;width:1px;height:19px;background:#a0a0a0;"></div>
<div style="left:113px;top:619px;width:179px;height:1px;background:#ffffff;"></div>
<div style="left:291px;top:600px;width:1px;height:20px;background:#ffffff;"></div>
<div class="t" style="left:115.29px;top:603px;font-size:14px;line-height:14px;color:#222;word-spacing:0.3px;letter-spacing:-0.35px;">C:\Users\ z\Desktop</div>
<div style="left:91px;top:627px;width:201px;height:20px;background:#fff;"></div>
<div style="left:91px;top:627px;width:200px;height:1px;background:#a0a0a0;"></div>
<div style="left:91px;top:627px;width:1px;height:19px;background:#a0a0a0;"></div>
<div style="left:91px;top:646px;width:201px;height:1px;background:#ffffff;"></div>
<div style="left:291px;top:627px;width:1px;height:20px;background:#ffffff;"></div>
<div class="t" style="left:93.09px;top:630px;font-size:14px;line-height:14px;color:#222;word-spacing:0.3px;letter-spacing:-0.35px;">test_</div>
<div style="left:308px;top:530px;width:254px;height:1px;background:#ffffff;"></div>
<div style="left:308px;top:530px;width:1px;height:122px;background:#ffffff;"></div>
<div style="left:307px;top:651px;width:255px;height:1px;background:#ffffff;"></div>
<div style="left:561px;top:529px;width:1px;height:123px;background:#ffffff;"></div>
<div style="left:307px;top:529px;width:254px;height:1px;background:#a0a0a0;"></div>
<div style="left:307px;top:529px;width:1px;height:122px;background:#a0a0a0;"></div>
<div style="left:307px;top:650px;width:254px;height:1px;background:#a0a0a0;"></div>
<div style="left:560px;top:529px;width:1px;height:122px;background:#a0a0a0;"></div>
<div style="left:312px;top:521px;width:82px;height:18px;background:#f0f0f0;"></div>
<div class="t" style="left:312.85px;top:523px;font-size:14px;line-height:14px;color:#222;word-spacing:0.3px;letter-spacing:-0.35px;">Motion Inputs</div>
<div class="t" style="left:313.47px;top:547px;font-size:14px;line-height:14px;color:#222;word-spacing:0.3px;letter-spacing:-0.35px;">Actuator:</div>
<div class="t" style="left:313.34px;top:576px;font-size:14px;line-height:14px;color:#222;word-spacing:0.3px;letter-spacing:-0.35px;">Offset Disp  :</div>
<div class="t" style="left:313.78px;top:602px;font-size:14px;line-height:14px;color:#222;word-spacing:0.3px;letter-spacing:-0.35px;">Jounce Disp  :</div>
<div class="t" style="left:312.85px;top:628px;font-size:14px;line-height:14px;color:#222;word-spacing:0.3px;letter-spacing:-0.35px;">Rebound Disp :</div>
<div style="left:413px;top:542px;width:143px;height:24px;background:#fff;"></div>
<div style="left:413px;top:542px;width:142px;height:1px;background:#8c8c8c;"></div>
<div style="left:414px;top:543px;width:141px;height:1px;background:#6e6e6e;"></div>
<div style="left:413px;top:542px;width:1px;height:23px;background:#8c8c8c;"></div>
<div style="left:414px;top:543px;width:1px;height:22px;background:#6e6e6e;"></div>
<div style="left:413px;top:565px;width:143px;height:1px;background:#fafafa;"></div>
<div style="left:555px;top:542px;width:1px;height:24px;background:#fafafa;"></div>
<div style="left:534px;top:544px;width:21px;height:21px;background:#f0f0f0;"></div>
<div style="left:534px;top:544px;width:21px;height:1px;background:#ffffff;"></div>
<div style="left:534px;top:544px;width:1px;height:21px;background:#ffffff;"></div>
<div style="left:534px;top:564px;width:21px;height:1px;background:#6e6e6e;"></div>
<div style="left:535px;top:563px;width:20px;height:1px;background:#6e6e6e;"></div>
<div style="left:554px;top:544px;width:1px;height:21px;background:#6e6e6e;"></div>
<div style="left:553px;top:545px;width:1px;height:20px;background:#6e6e6e;"></div>
<svg style="position:absolute;left:534px;top:544px" width="21" height="22"><path d="M5.5 9 h9 l-4.5 5 z" fill="#000"/></svg>
<div class="t" style="left:417.55px;top:548px;font-size:14px;line-height:14px;color:#222;word-spacing:0.3px;letter-spacing:-0.35px;">Motion</div>
<div style="left:413px;top:573px;width:144px;height:20px;background:#fff;"></div>
<div style="left:413px;top:573px;width:143px;height:1px;background:#a0a0a0;"></div>
<div style="left:413px;top:573px;width:1px;height:19px;background:#a0a0a0;"></div>
<div style="left:413px;top:592px;width:144px;height:1px;background:#ffffff;"></div>
<div style="left:556px;top:573px;width:1px;height:20px;background:#ffffff;"></div>
<div class="t" style="left:547.91px;top:576px;font-size:14px;line-height:14px;color:#222;word-spacing:0.3px;letter-spacing:-1.15px;">0</div>
<div style="left:413px;top:599px;width:144px;height:20px;background:#fff;"></div>
<div style="left:413px;top:599px;width:143px;height:1px;background:#a0a0a0;"></div>
<div style="left:413px;top:599px;width:1px;height:19px;background:#a0a0a0;"></div>
<div style="left:413px;top:618px;width:144px;height:1px;background:#ffffff;"></div>
<div style="left:556px;top:599px;width:1px;height:20px;background:#ffffff;"></div>
<div class="t" style="left:547.91px;top:602px;font-size:14px;line-height:14px;color:#222;word-spacing:0.3px;letter-spacing:-1.15px;">0</div>
<div style="left:413px;top:625px;width:144px;height:20px;background:#fff;"></div>
<div style="left:413px;top:625px;width:143px;height:1px;background:#a0a0a0;"></div>
<div style="left:413px;top:625px;width:1px;height:19px;background:#a0a0a0;"></div>
<div style="left:413px;top:644px;width:144px;height:1px;background:#ffffff;"></div>
<div style="left:556px;top:625px;width:1px;height:20px;background:#ffffff;"></div>
<div class="t" style="left:547.91px;top:628px;font-size:14px;line-height:14px;color:#222;word-spacing:0.3px;letter-spacing:-1.15px;">0</div>
<div style="left:8px;top:669px;width:570px;height:1px;background:#ffffff;"></div>
<div style="left:8px;top:669px;width:1px;height:117px;background:#ffffff;"></div>
<div style="left:7px;top:785px;width:571px;height:1px;background:#ffffff;"></div>
<div style="left:577px;top:668px;width:1px;height:118px;background:#ffffff;"></div>
<div style="left:7px;top:668px;width:570px;height:1px;background:#a0a0a0;"></div>
<div style="left:7px;top:668px;width:1px;height:117px;background:#a0a0a0;"></div>
<div style="left:7px;top:784px;width:570px;height:1px;background:#a0a0a0;"></div>
<div style="left:576px;top:668px;width:1px;height:117px;background:#a0a0a0;"></div>
<div style="left:12px;top:660px;width:117px;height:18px;background:#f0f0f0;"></div>
<div class="t" style="left:13.76px;top:662px;font-size:14px;line-height:14px;color:#222;word-spacing:0.3px;letter-spacing:-0.35px;">Simulation Settings</div>
<div class="t" style="left:16.86px;top:688px;font-size:14px;line-height:14px;color:#222;word-spacing:0.3px;letter-spacing:-0.35px;">Step Size:</div>
<div class="t" style="left:16.35px;top:714px;font-size:14px;line-height:14px;color:#222;word-spacing:0.3px;letter-spacing:-0.35px;">Print Interval:</div>
<div class="t" style="left:16.86px;top:742px;font-size:14px;line-height:14px;color:#222;word-spacing:0.3px;letter-spacing:-0.35px;">Simulation Type:</div>
<div style="left:124px;top:685px;width:144px;height:20px;background:#fff;"></div>
<div style="left:124px;top:685px;width:143px;height:1px;background:#a0a0a0;"></div>
<div style="left:124px;top:685px;width:1px;height:19px;background:#a0a0a0;"></div>
<div style="left:124px;top:704px;width:144px;height:1px;background:#ffffff;"></div>
<div style="left:267px;top:685px;width:1px;height:20px;background:#ffffff;"></div>
<div class="t" style="left:234.90px;top:688px;font-size:14px;line-height:14px;color:#222;word-spacing:0.3px;letter-spacing:-1.15px;">0.001</div>
<div style="left:124px;top:711px;width:144px;height:20px;background:#fff;"></div>
<div style="left:124px;top:711px;width:143px;height:1px;background:#a0a0a0;"></div>
<div style="left:124px;top:711px;width:1px;height:19px;background:#a0a0a0;"></div>
<div style="left:124px;top:730px;width:144px;height:1px;background:#ffffff;"></div>
<div style="left:267px;top:711px;width:1px;height:20px;background:#ffffff;"></div>
<div class="t" style="left:241.54px;top:714px;font-size:14px;line-height:14px;color:#222;word-spacing:0.3px;letter-spacing:-1.15px;">0.01</div>
<div style="left:124px;top:737px;width:143px;height:24px;background:#fff;"></div>
<div style="left:124px;top:737px;width:142px;height:1px;background:#8c8c8c;"></div>
<div style="left:125px;top:738px;width:141px;height:1px;background:#6e6e6e;"></div>
<div style="left:124px;top:737px;width:1px;height:23px;background:#8c8c8c;"></div>
<div style="left:125px;top:738px;width:1px;height:22px;background:#6e6e6e;"></div>
<div style="left:124px;top:760px;width:143px;height:1px;background:#fafafa;"></div>
<div style="left:266px;top:737px;width:1px;height:24px;background:#fafafa;"></div>
<div style="left:245px;top:739px;width:21px;height:21px;background:#f0f0f0;"></div>
<div style="left:245px;top:739px;width:21px;height:1px;background:#ffffff;"></div>
<div style="left:245px;top:739px;width:1px;height:21px;background:#ffffff;"></div>
<div style="left:245px;top:759px;width:21px;height:1px;background:#6e6e6e;"></div>
<div style="left:246px;top:758px;width:20px;height:1px;background:#6e6e6e;"></div>
<div style="left:265px;top:739px;width:1px;height:21px;background:#6e6e6e;"></div>
<div style="left:264px;top:740px;width:1px;height:20px;background:#6e6e6e;"></div>
<svg style="position:absolute;left:245px;top:739px" width="21" height="22"><path d="M5.5 9 h9 l-4.5 5 z" fill="#000"/></svg>
<div class="t" style="left:128.54px;top:743px;font-size:14px;line-height:14px;color:#222;word-spacing:0.3px;letter-spacing:-0.35px;">Quasi-static</div>
<div class="t" style="left:318.45px;top:690px;font-size:14px;line-height:14px;color:#222;word-spacing:0.3px;letter-spacing:-0.35px;">End Time:</div>
<div style="left:418px;top:687px;width:144px;height:20px;background:#fff;"></div>
<div style="left:418px;top:687px;width:143px;height:1px;background:#a0a0a0;"></div>
<div style="left:418px;top:687px;width:1px;height:19px;background:#a0a0a0;"></div>
<div style="left:418px;top:706px;width:144px;height:1px;background:#ffffff;"></div>
<div style="left:561px;top:687px;width:1px;height:20px;background:#ffffff;"></div>
<div class="t" style="left:536.90px;top:690px;font-size:14px;line-height:14px;color:#222;word-spacing:0.3px;letter-spacing:-1.15px;">10.0</div>
<div style="left:320px;top:721px;width:13px;height:13px;background:#ffffff;"></div>
<div style="left:320px;top:721px;width:12px;height:1px;background:#a0a0a0;"></div>
<div style="left:320px;top:721px;width:1px;height:12px;background:#a0a0a0;"></div>
<div style="left:321px;top:722px;width:10px;height:1px;background:#000;"></div>
<div style="left:321px;top:722px;width:1px;height:10px;background:#000;"></div>
<div style="left:320px;top:733px;width:13px;height:1px;background:#fff;"></div>
<div style="left:332px;top:721px;width:1px;height:13px;background:#fff;"></div>
<div style="left:321px;top:732px;width:11px;height:1px;background:#e3e3e3;"></div>
<div style="left:331px;top:722px;width:1px;height:11px;background:#e3e3e3;"></div>
<div class="t" style="left:338.25px;top:720px;font-size:14px;line-height:14px;color:#222;word-spacing:0.3px;letter-spacing:-0.35px;">Build Leaf</div>
<div style="left:318px;top:747px;width:90px;height:28px;background:#c0c0c0;"></div>
<div style="left:318px;top:747px;width:89px;height:1px;background:#ffffff;"></div>
<div style="left:318px;top:747px;width:1px;height:27px;background:#ffffff;"></div>
<div style="left:407px;top:747px;width:1px;height:29px;background:#000;"></div>
<div style="left:318px;top:774px;width:90px;height:1px;background:#000;"></div>
<div style="left:406px;top:748px;width:1px;height:26px;background:#808080;"></div>
<div style="left:319px;top:773px;width:88px;height:1px;background:#808080;"></div>
<div class="t" style="left:323.55px;top:753px;font-size:14px;line-height:14px;color:#222;word-spacing:0.3px;letter-spacing:-0.35px;">Run Test Rig</div>
<div style="left:585px;top:504px;width:555px;height:1px;background:#ffffff;"></div>
<div style="left:585px;top:504px;width:1px;height:286px;background:#ffffff;"></div>
<div style="left:584px;top:789px;width:556px;height:1px;background:#ffffff;"></div>
<div style="left:1139px;top:503px;width:1px;height:287px;background:#ffffff;"></div>
<div style="left:584px;top:503px;width:555px;height:1px;background:#a0a0a0;"></div>
<div style="left:584px;top:503px;width:1px;height:286px;background:#a0a0a0;"></div>
<div style="left:584px;top:788px;width:555px;height:1px;background:#a0a0a0;"></div>
<div style="left:1138px;top:503px;width:1px;height:286px;background:#a0a0a0;"></div>
<div style="left:589px;top:495px;width:76px;height:18px;background:#f0f0f0;"></div>
<div class="t" style="left:590.15px;top:497px;font-size:14px;line-height:14px;color:#222;word-spacing:0.3px;letter-spacing:-0.35px;">Help section</div>
<div style="left:589px;top:752px;width:548px;height:12px;background:#fdfdfd;"></div>
<div style="left:588px;top:514px;width:549px;height:238px;background:#ffffff;box-sizing:border-box;border:1px solid #a0a0a0"></div>
<div style="left:1029px;top:863px;width:55px;height:28px;background:#f0f0f0;"></div>
<div style="left:1029px;top:863px;width:54px;height:1px;background:#ffffff;"></div>
<div style="left:1029px;top:863px;width:1px;height:27px;background:#ffffff;"></div>
<div style="left:1083px;top:863px;width:1px;height:28px;background:#000;"></div>
<div style="left:1029px;top:890px;width:55px;height:1px;background:#000;"></div>
<div style="left:1082px;top:864px;width:1px;height:26px;background:#6a6a6a;"></div>
<div style="left:1030px;top:889px;width:53px;height:1px;background:#6a6a6a;"></div>
<div style="left:1083px;top:863px;width:55px;height:28px;background:#f0f0f0;"></div>
<div style="left:1083px;top:863px;width:54px;height:1px;background:#ffffff;"></div>
<div style="left:1083px;top:863px;width:1px;height:27px;background:#ffffff;"></div>
<div style="left:1137px;top:863px;width:1px;height:28px;background:#000;"></div>
<div style="left:1083px;top:890px;width:55px;height:1px;background:#000;"></div>
<div style="left:1136px;top:864px;width:1px;height:26px;background:#6a6a6a;"></div>
<div style="left:1084px;top:889px;width:53px;height:1px;background:#6a6a6a;"></div>
<div class="t" style="left:1040.25px;top:870px;font-size:14px;line-height:14px;color:#222;word-spacing:0.3px;letter-spacing:-0.35px;">Build</div>
<div class="t" style="left:1088.49px;top:870px;font-size:14px;line-height:14px;color:#222;word-spacing:0.3px;letter-spacing:-0.35px;">Cancel</div>
<div style="left:1089px;top:884px;width:10px;height:1px;background:#000;"></div>
<svg style="position:absolute;left:0;top:0" width="1142" height="897" viewBox="0 0 1142 897"><defs><clipPath id="hc"><rect x="589" y="515" width="547" height="236"/></clipPath></defs><g clip-path="url(#hc)"><polyline points="669.0,586.51 673.0,586.94 677.0,587.35 681.0,587.75 685.0,588.15 689.0,588.53 693.0,588.90 697.0,589.25 701.0,589.60 705.0,589.93 709.0,590.25 713.0,590.56 717.0,590.86 721.0,591.15 725.0,591.43 729.0,591.70 733.0,591.96 737.0,592.20 741.0,592.44 745.0,592.66 749.0,592.88 753.0,593.08 757.0,593.28 761.0,593.46 765.0,593.64 769.0,593.81 773.0,593.96 777.0,594.11 781.0,594.25 785.0,594.38 789.0,594.50 793.0,594.61 797.0,594.71 801.0,594.81 805.0,594.90 809.0,594.98 813.0,595.05 817.0,595.11 821.0,595.17 825.0,595.22 829.0,595.26 833.0,595.30 837.0,595.33 841.0,595.35 845.0,595.37 849.0,595.38 853.0,595.39 857.0,595.40 861.0,595.40 865.0,595.40 869.0,595.40 873.0,595.40 877.0,595.40 881.0,595.40 885.0,595.39 889.0,595.39 893.0,595.38 897.0,595.37 901.0,595.36 905.0,595.34 909.0,595.33 913.0,595.31 917.0,595.28 921.0,595.25 925.0,595.22 929.0,595.18 933.0,595.14 937.0,595.10 941.0,595.04 945.0,594.99 949.0,594.92 953.0,594.85 957.0,594.78 961.0,594.70 965.0,594.61 969.0,594.51 973.0,594.40 977.0,594.29 981.0,594.17 985.0,594.04 989.0,593.90 993.0,593.75 997.0,593.60 1001.0,593.43 1005.0,593.25 1009.0,593.06 1013.0,592.86 1017.0,592.66 1021.0,592.44 1025.0,592.20 1029.0,591.96 1033.0,591.70 1037.0,591.43 1041.0,591.15 1045.0,590.86 1049.0,590.55 1053.0,590.23 1057.0,589.89 1061.0,589.54 1065.0,589.18 1069.0,588.80" stroke="#808080" stroke-width="1" fill="none" /><polyline points="643.3,600.49 647.3,600.91 651.3,601.32 655.3,601.73 659.3,602.13 663.3,602.52 667.3,602.90 671.3,603.28 675.3,603.65 679.3,604.02 683.3,604.37 687.3,604.72 691.3,605.06 695.3,605.40 699.3,605.72 703.3,606.04 707.3,606.36 711.3,606.66 715.3,606.96 719.3,607.25 723.3,607.53 727.3,607.81 731.3,608.08 735.3,608.34 739.3,608.59 743.3,608.84 747.3,609.08 751.3,609.31 755.3,609.53 759.3,609.75 763.3,609.96 767.3,610.16 771.3,610.35 775.3,610.54 779.3,610.72 783.3,610.89 787.3,611.05 791.3,611.20 795.3,611.35 799.3,611.49 803.3,611.62 807.3,611.75 811.3,611.86 815.3,611.97 819.3,612.07 823.3,612.16 827.3,612.24 831.3,612.32 835.3,612.38 839.3,612.44 843.3,612.49 847.3,612.53 851.3,612.56 855.3,612.58 859.3,612.60 863.3,612.60 867.3,612.60 871.3,612.60 875.3,612.59 879.3,612.59 883.3,612.58 887.3,612.57 891.3,612.55 895.3,612.53 899.3,612.51 903.3,612.48 907.3,612.45 911.3,612.41 915.3,612.37 919.3,612.32 923.3,612.27 927.3,612.21 931.3,612.14 935.3,612.07 939.3,612.00 943.3,611.91 947.3,611.82 951.3,611.72 955.3,611.62 959.3,611.51 963.3,611.39 967.3,611.26 971.3,611.12 975.3,610.98 979.3,610.83 983.3,610.67 987.3,610.50 991.3,610.32 995.3,610.14 999.3,609.94 1003.3,609.74 1007.3,609.52 1011.3,609.30 1015.3,609.07 1019.3,608.82 1023.3,608.57 1027.3,608.31 1031.3,608.04 1035.3,607.75 1039.3,607.46 1043.3,607.15 1047.3,606.84 1051.3,606.51 1055.3,606.18 1059.3,605.83 1063.3,605.47 1067.3,605.10 1071.3,604.71 1075.3,604.32 1079.3,603.91 1083.3,603.49 1087.3,603.06 1089.7,602.80" stroke="#808080" stroke-width="1" fill="none" /><polyline points="673.9,617.86 677.9,618.35 681.9,618.83 685.9,619.29 689.9,619.75 693.9,620.19 697.9,620.62 701.9,621.04 705.9,621.44 709.9,621.84 713.9,622.22 717.9,622.59 721.9,622.95 725.9,623.30 729.9,623.63 733.9,623.96 737.9,624.27 741.9,624.57 745.9,624.86 749.9,625.14 753.9,625.41 757.9,625.66 761.9,625.91 765.9,626.14 769.9,626.37 773.9,626.58 777.9,626.78 781.9,626.97 785.9,627.15 789.9,627.32 793.9,627.48 797.9,627.63 801.9,627.77 805.9,627.90 809.9,628.01 813.9,628.12 817.9,628.22 821.9,628.31 825.9,628.39 829.9,628.46 833.9,628.52 837.9,628.57 841.9,628.61 845.9,628.65 849.9,628.67 853.9,628.69 857.9,628.70 861.9,628.70 865.9,628.70 869.9,628.70 873.9,628.69 877.9,628.67 881.9,628.66 885.9,628.63 889.9,628.60 893.9,628.56 897.9,628.52 901.9,628.47 905.9,628.41 909.9,628.34 913.9,628.26 917.9,628.18 921.9,628.08 925.9,627.98 929.9,627.87 933.9,627.75 937.9,627.62 941.9,627.48 945.9,627.33 949.9,627.16 953.9,626.99 957.9,626.81 961.9,626.62 965.9,626.41 969.9,626.20 973.9,625.97 977.9,625.73 981.9,625.48 985.9,625.22 989.9,624.94 993.9,624.66 997.9,624.36 1001.9,624.05 1005.9,623.73 1009.9,623.39 1013.9,623.04 1017.9,622.68 1021.9,622.30 1025.9,621.92 1029.9,621.51 1033.9,621.10 1037.9,620.67 1041.9,620.23 1045.9,619.77 1049.9,619.30 1053.9,618.82 1057.9,618.32 1061.9,617.81 1065.9,617.28 1068.0,617.00" stroke="#808080" stroke-width="1" fill="none" /><polyline points="708.5,637.45 712.5,637.85 716.5,638.24 720.5,638.61 724.5,638.98 728.5,639.32 732.5,639.66 736.5,639.98 740.5,640.29 744.5,640.59 748.5,640.87 752.5,641.14 756.5,641.40 760.5,641.65 764.5,641.88 768.5,642.10 772.5,642.31 776.5,642.51 780.5,642.70 784.5,642.87 788.5,643.03 792.5,643.19 796.5,643.33 800.5,643.46 804.5,643.58 808.5,643.69 812.5,643.79 816.5,643.88 820.5,643.96 824.5,644.03 828.5,644.09 832.5,644.14 836.5,644.19 840.5,644.22 844.5,644.25 848.5,644.27 852.5,644.29 856.5,644.30 860.5,644.30 864.5,644.30 868.5,644.30 872.5,644.29 876.5,644.28 880.5,644.27 884.5,644.25 888.5,644.23 892.5,644.20 896.5,644.17 900.5,644.13 904.5,644.08 908.5,644.03 912.5,643.97 916.5,643.90 920.5,643.82 924.5,643.74 928.5,643.65 932.5,643.54 936.5,643.43 940.5,643.31 944.5,643.18 948.5,643.05 952.5,642.90 956.5,642.74 960.5,642.57 964.5,642.39 968.5,642.20 972.5,642.00 976.5,641.79 980.5,641.57 984.5,641.34 988.5,641.09 992.5,640.84 996.5,640.57 1000.5,640.29 1004.5,640.00 1008.5,639.69 1012.5,639.38 1016.5,639.05 1020.5,638.70 1024.5,638.35 1028.5,637.98 1032.5,637.60 1033.5,637.50" stroke="#808080" stroke-width="1" fill="none" /><path d="M675.6 604.3 L673.9 617.9 L682 618.6 M1067.4 606.3 L1068 617 M709.6 622.4 L708.5 637.8 M1032.3 622 L1033.5 637.5" stroke="#808080" stroke-width="1" fill="none"/><rect x="742.8" y="644.4" width="256.5" height="16.3" stroke="#808080" stroke-width="1" fill="none"/><circle cx="645.7" cy="575.7" r="26" fill="#fff" stroke="#808080" stroke-width="1"/><circle cx="645.7" cy="575.7" r="10.4" stroke="#808080" stroke-width="1" fill="none"/><circle cx="1093.8" cy="579.2" r="25.6" fill="#fff" stroke="#808080" stroke-width="1"/><circle cx="1093.8" cy="579.2" r="10.6" stroke="#808080" stroke-width="1" fill="none"/><path d="M1042.4 536.4 L1079.9 558.2 M1030 554.6 L1067.9 576.9" stroke="#808080" stroke-width="1" fill="none"/><circle cx="1025.1" cy="538.5" r="17.4" stroke="#808080" stroke-width="1" fill="none"/><circle cx="1025.1" cy="538.5" r="13.8" stroke="#808080" stroke-width="1" fill="none"/><path d="M691.8 579.1 L701.8 581.1 L690.3 628.5 L680.6 626.6 Z" fill="#fff" stroke="#808080" stroke-width="1"/><path d="M845.5 585.3 V570.8 A17.3 17.3 0 0 1 880.1 570.8 V585.3" fill="#fff" stroke="#808080" stroke-width="1"/><circle cx="862.4" cy="565" r="9.7" stroke="#808080" stroke-width="1" fill="none"/><rect x="829.4" y="579.3" width="16.1" height="6" fill="#fff" stroke="#808080" stroke-width="1"/><rect x="880.1" y="579.3" width="15.4" height="6" fill="#fff" stroke="#808080" stroke-width="1"/><rect x="828.3" y="585.6" width="68.4" height="9.8" fill="#fff" stroke="#808080" stroke-width="1"/><rect x="835.4" y="595.4" width="10.1" height="72.3" fill="#fff" stroke="#808080" stroke-width="1"/><rect x="879.5" y="595.4" width="10" height="72.3" fill="#fff" stroke="#808080" stroke-width="1"/><path d="M862.5 662.3 L884.6 683.6 L873.7 683.6 L873.7 734 L851 734 L851 683.6 L840.1 683.6 Z" fill="#5b9bd5" stroke="#4a86c0" stroke-width="0.5"/><path d="M862.5 515 V751" stroke="#6a6a6a" stroke-width="0.9" stroke-dasharray="5 3 1 3" fill="none"/><path d="M873.7 683.6 V734 H851 V683.6 H840.1 L862.5 662.3 L884.6 683.6 Z" fill="#5b9bd5"/><path d="M612.9 733.6 V645" stroke="#5b9bd5" stroke-width="2" fill="none"/><path d="M608.6 647 L612.9 640.5 L617.2 647 Z" fill="#5b9bd5"/><path d="M612.9 733.6 H711" stroke="#5b9bd5" stroke-width="2" fill="none"/><path d="M710 729.3 L717.3 733.6 L710 737.9 Z" fill="#5b9bd5"/><path d="M613.5 733.2 Q657 709.5 704.5 657.8" stroke="#000" stroke-width="2.4" fill="none" stroke-linecap="round"/></g><text x="598.3" y="690.6" font-family="Liberation Sans" font-size="13.5" fill="#000">F</text><text x="657.2" y="749.6" font-family="Liberation Sans" font-size="13.5" fill="#000">D</text><text x="879" y="726.2" font-family="Liberation Sans" font-weight="bold" font-size="14.2" letter-spacing="0.85" fill="#2e75b6">Force/Motion</text></svg>
</body></html>
